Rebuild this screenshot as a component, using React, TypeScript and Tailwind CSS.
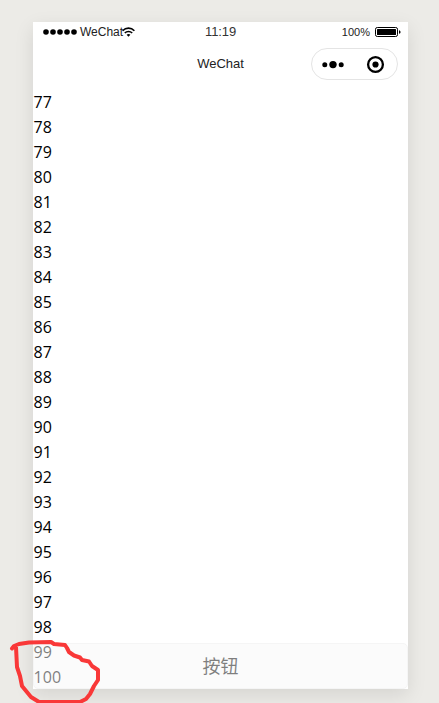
import React from "react";

const rows = Array.from({ length: 24 }, (_, i) => 77 + i);

const StatusBar: React.FC = () => (
  <div className="relative flex h-5 items-center justify-between pl-[10px] pr-[7px] text-[12px] leading-5 text-[#222]">
    <div className="flex items-center">
      <svg className="h-[6px] w-[34px]" viewBox="0 0 34 6" fill="#000">
        <circle cx="3" cy="3" r="2.8" />
        <circle cx="10" cy="3" r="2.8" />
        <circle cx="17" cy="3" r="2.8" />
        <circle cx="24" cy="3" r="2.8" />
        <circle cx="31" cy="3" r="2.8" />
      </svg>
      <span className="ml-[3px]">WeChat</span>
      <svg
        className="-ml-px h-[10px] w-[13px]"
        viewBox="0 0 13 10"
        fill="none"
        stroke="#000"
        strokeWidth="1.6"
      >
        <path d="M.6 3.7C4 .3 9 .3 12.4 3.7" />
        <path d="M2.8 6c2-2 5.4-2 7.4 0" />
        <path d="M4.6 7.7c1.1-1 2.7-1 3.8 0L6.5 9.7z" fill="#000" stroke="none" />
      </svg>
    </div>
    <span className="absolute left-1/2 -translate-x-1/2 text-[13px] tracking-[-0.1px] text-[#333]">
      11:19
    </span>
    <div className="flex items-center">
      <span className="text-[11px]">100%</span>
      <svg className="ml-[5px] h-[10px] w-[26px]" viewBox="0 0 26 10">
        <rect x=".5" y=".5" width="22" height="9" rx="1.8" fill="none" stroke="#000" />
        <rect x="2" y="2" width="19" height="6" rx=".5" fill="#000" />
        <path d="M24 3.2c2 .3 2 3.3 0 3.6z" fill="#000" />
      </svg>
    </div>
  </div>
);

const NavBar: React.FC = () => (
  <div className="relative flex h-12 items-center justify-end pr-[10px] pb-1">
    <span className="absolute left-1/2 top-[12px] -translate-x-1/2 text-[13px] leading-5 text-[#222]">
      WeChat
    </span>
    <div className="flex h-8 w-[87px] items-center rounded-full border border-[#e4e4e4]">
      <svg className="h-[30px] w-[85px]" viewBox="0 0 85 30">
        <circle cx="12.8" cy="15.8" r="2.5" />
        <circle cx="21" cy="15.6" r="3.7" />
        <circle cx="29.2" cy="15.8" r="2.5" />
        <circle cx="63.5" cy="15.5" r="7.4" fill="none" stroke="#000" strokeWidth="2.3" />
        <circle cx="63.5" cy="15.5" r="3.1" />
      </svg>
    </div>
  </div>
);

const Annotation: React.FC = () => (
  <svg
    className="pointer-events-none absolute left-0 top-[620px] h-[83px] w-[140px]"
    viewBox="0 0 140 83"
    fill="none"
    stroke="#f93838"
    strokeWidth="4"
    strokeLinecap="round"
    strokeLinejoin="round"
  >
    <path d="M12 28.5L14 26L19 24L29 22.5L51 22L54 24L65 25L67 28L69 32L74 35.5L80 37.5L82 40L89 41.5L92 46L98 50L98 60L94 66L90 74L86 79L80 82L39 82L31 77L22 66L20 56L17 47L16 27" />
  </svg>
);

export default function App() {
  return (
    <div className="relative h-[703px] w-[439px] overflow-hidden bg-[#ecebe7] pl-[33px] pt-[22px] font-['Liberation_Sans',Arial,sans-serif]">
      <div className="relative h-[667px] w-[375px] bg-white shadow-[0_6px_18px_0_rgba(0,0,0,0.1)]">
        <StatusBar />
        <NavBar />
        <div className="h-[599px] overflow-hidden pl-[0.4px] font-['Open_Sans','Noto_Sans_CJK_SC',sans-serif] text-[16px] leading-[25px] tracking-[0.2px] text-black">
          {rows.map((n) => (
            <div key={n}>{n}</div>
          ))}
        </div>
        <button className="absolute inset-x-0 bottom-0 h-[46px] rounded-[5px] border border-[#ececec] bg-[#f8f8f8] pb-0.5 font-['Noto_Sans_CJK_SC',sans-serif] text-[18px] text-black opacity-50">
          按钮
        </button>
      </div>
      <Annotation />
    </div>
  );
}
